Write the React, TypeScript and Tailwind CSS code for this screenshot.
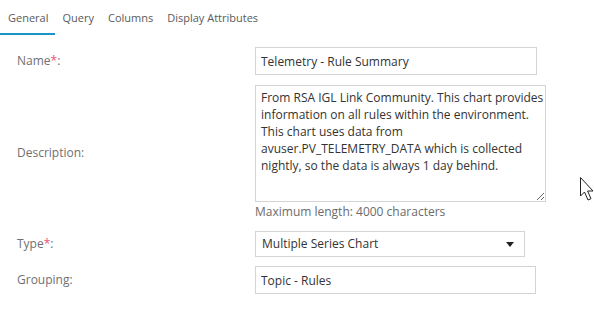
import React from 'react';

const tabs = ['General', 'Query', 'Columns', 'Display Attributes'];

function Label({ text, required }: { text: string; required?: boolean }) {
  return (
    <div className="w-[255px] shrink-0 pl-[17px] text-[12px] text-[#707070]">
      {text}
      {required && <span className="text-[#f0506e]">*</span>}:
    </div>
  );
}

export default function App() {
  const [tab, setTab] = React.useState('General');

  return (
    <div
      className="relative w-[594px] h-[322px] bg-white overflow-hidden"
      style={{ fontFamily: '"Open Sans", "Noto Sans", sans-serif' }}
    >
      {/* tab strip */}
      <div className="flex h-[35px] text-[11px] text-[#5a5a5a]">
        {tabs.map((t) => (
          <div
            key={t}
            onClick={() => setTab(t)}
            className={
              'cursor-pointer px-[7px] pt-[10px] ' +
              (t === tab ? 'border-b-2 border-[#1a93c6] pl-[8px]' : '')
            }
          >
            {t}
          </div>
        ))}
      </div>

      <div className="flex flex-col pt-[12px] text-[12px] text-[#333]">
        <div className="flex items-center">
          <Label text="Name" required />
          <input
            className="w-[282px] h-[28px] border border-[#d4d4d4] px-[5px] outline-none"
            defaultValue="Telemetry - Rule Summary"
          />
        </div>

        <div className="flex items-center mt-[10px]">
          <Label text="Description" />
          <div className="flex flex-col">
            <textarea
              className="w-[291px] h-[117px] border border-[#d4d4d4] pl-[5px] pr-0 pt-[3px] leading-[17px] outline-none resize-y overflow-hidden"
              defaultValue="From RSA IGL Link Community. This chart provides information on all rules within the environment. This chart uses data from avuser.PV_TELEMETRY_DATA which is collected nightly, so the data is always 1 day behind."
            />
            <div className="text-[#6b6b6b] leading-[17px] mt-[1px]">
              Maximum length: 4000 characters
            </div>
          </div>
        </div>

        <div className="flex items-center mt-[11px]">
          <Label text="Type" required />
          <div className="w-[270px] h-[26px] border border-[#d4d4d4] flex items-center justify-between pl-[6px] pr-[10px]">
            <span>Multiple Series Chart</span>
            <svg width="8" height="5" viewBox="0 0 8 5">
              <path d="M0 0h8L4 5z" fill="#222" />
            </svg>
          </div>
        </div>

        <div className="flex items-center mt-[9px]">
          <Label text="Grouping" />
          <input
            className="w-[281px] h-[28px] border border-[#d4d4d4] px-[5px] outline-none"
            defaultValue="Topic - Rules"
          />
        </div>
      </div>

      {/* mouse pointer */}
      <svg
        className="absolute left-[580px] top-[177px]"
        width="14"
        height="28"
        viewBox="0 0 14 28"
      >
        <path
          d="M0.5 0.5 L0.5 19 L4.5 15 L8 23 L11 21.7 L7.6 14 L13 14 Z"
          fill="#fff"
          stroke="#222"
          strokeWidth="1"
        />
      </svg>
    </div>
  );
}
